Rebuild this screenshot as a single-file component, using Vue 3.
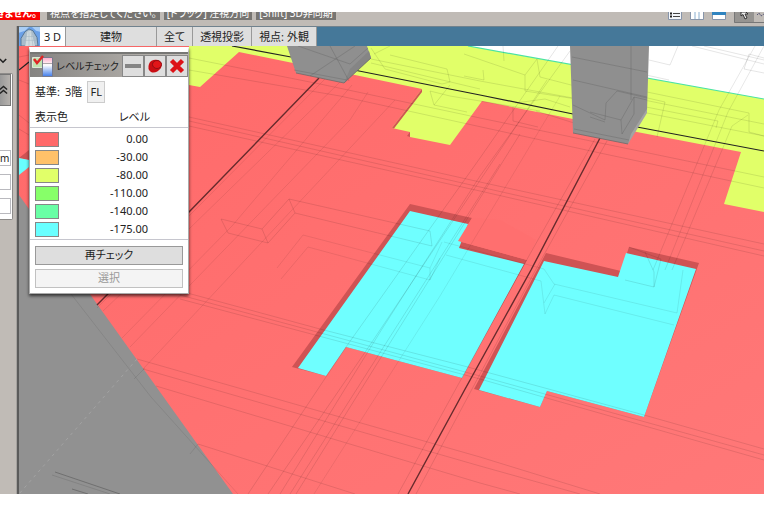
<script setup>
const levels = [
  { color: '#ff6969', value: '0.00' },
  { color: '#ffc169', value: '-30.00' },
  { color: '#e1ff69', value: '-80.00' },
  { color: '#87ff69', value: '-110.00' },
  { color: '#69ffa5', value: '-140.00' },
  { color: '#69ffff', value: '-175.00' }
]
const tabs = [
  { label: '建物', kind: 'wide' },
  { label: '全て', kind: '' },
  { label: '透視投影', kind: '' },
  { label: '視点: 外観', kind: '' }
]
</script>

<template>
  <div class="app">
    <header class="strip">
      <span class="chip alert">きません。</span>
      <span class="chip">視点を指定してください。</span>
      <span class="chip">[ドラッグ] 注視方向</span>
      <span class="chip">[Shift] 3D非同期</span>
      <div class="tools">
        <svg class="tool" viewBox="0 0 14 8"><path d="M.5 0V7.500H13.500V0" fill="#f4f7fb" stroke="#8795aa" /><path d="M2 1.500h2M2 4.500h2" stroke="#222" stroke-width="2" /><path d="M5 1.500h7M5 4.500h7" stroke="#444" /></svg>
        <svg class="tool" viewBox="0 0 14 8"><path d="M.5 0V7.500H13.500V0" fill="#fff" stroke="#8795aa" /><path d="M5 0V7M9 0V7" stroke="#8aafd0" /></svg>
        <svg class="tool" viewBox="0 0 14 8"><path d="M.5 0V7.500H13.500V0" fill="#fff" stroke="#8795aa" /><path d="M0 1.500H14" stroke="#2f84c0" stroke-width="3" /></svg>
        <svg class="cursor" viewBox="0 0 30 11"><path d="M0 0H20V10.500H0Z" fill="#969491" /><path d="M.5 0V10.500H30" fill="none" stroke="#777" /><path d="M7 0V4L9 2.500 11 7 13 6 11 2H14L12 0Z" fill="#eee" stroke="#333" /><path d="M23 3l2-2 2 3 3-2" fill="none" stroke="#557" stroke-dasharray="2 1" /></svg>
      </div>
    </header>

    <div class="main">
      <aside class="side">
        <button class="fold" aria-label="開く"><svg viewBox="0 0 10 8"><path d="M1 1.500L5 5.500 9 1.500" fill="none" stroke="#222" stroke-width="2" /></svg></button>
        <div class="group">
          <button class="collapse" aria-label="閉じる"><svg viewBox="0 0 10 10"><path d="M1 4.500L5 1 9 4.500M1 9L5 5.500 9 9" fill="none" stroke="#222" stroke-width="1.500" /></svg></button>
          <div class="fields">
            <input class="field" type="text" value="m" aria-label="単位">
            <input class="field" type="text" aria-label="値1">
            <input class="field" type="text" aria-label="値2">
          </div>
        </div>
      </aside>

      <section class="view">
        <nav class="tabs">
          <svg class="logo" viewBox="0 0 21 20" preserveAspectRatio="none">
            <rect width="21" height="20" fill="#6ba1e8" /><path d="M0 0H10L6 4 0 6ZM13 0H21V5L17 4Z" fill="#a9cdf5" />
            <path d="M2 20V12L6 5 10 2 14 4 18 11 19 20Z" fill="#a9bccb" stroke="#537595" /><path d="M6 20L8 5 12 4 16 20Z" fill="#d1dce0" /><path d="M8 5L6 20M10 5V20M12 5l2 15M6 10h9M5 14h12" stroke="#a0b2bf" stroke-width=".5" fill="none" />
          </svg>
          <button class="tab active">3 D</button>
          <button v-for="t in tabs" :key="t.label" class="tab" :class="t.kind">{{ t.label }}</button>
        </nav>

        <div class="canvas">
          <svg class="scene" viewBox="19 46 745 448">
            <defs>
              <linearGradient id="floor" x1="0" y1="0" x2="1" y2="1"><stop offset="0" stop-color="#ff6969" /><stop offset="1" stop-color="#ff7878" /></linearGradient>
            </defs>
            <rect x="19" y="46" width="745" height="448" fill="#fff" />
            <path d="M19 46H468L764 99V494H19Z" fill="#e1ff69" />
            <path d="M468 46L764 99" stroke="#4be3a3" stroke-width="1.200" />
            <path d="M19 46H189V85L200 87 239 52 293 63 355 75 422 89 392 128 410 132V137L450 145 482 101 573 119 637 132 741 152 724 204 764 212V494H19Z" fill="url(#floor)" />
            <path d="M422 89V92L394 128.500 392 128ZM410 132V137L407 136Z" fill="#cf5354" />
            <path d="M19 195L233 494H19Z" fill="#919191" />
            <path d="M19 158L29 150V160Z" fill="#cf5354" /><path d="M19 158L29 160V167L19 175Z" fill="#69ffff" />

            <path d="M410 204L472 218 458 241 527 260 462 378 346 347 326 376 292 367Z" fill="#cf5354" />
            <path d="M410 211L468 224 459 248 524 264 462 378 346 347 326 376 298 368Z" fill="#6fffff" />
            <path d="M472 218L458 241 527 260 536 240 500 220Z" fill="#ff6f6f" />
            <path d="M546 253L621 271 629 247 699 263 644 417 547 391 540 407 474 389Z" fill="#cf5354" />
            <path d="M544 261L618 277 626 253 696 269 644 417 547 391 540 407 479 390Z" fill="#6fffff" />

            <g fill="none" stroke="#000" stroke-opacity=".13" stroke-width=".8">
              <path d="M189 117L480 182 764 244M189 121L480 187 764 251M189 126L480 191 764 256" />
              <path d="M189 58L320 84 480 118 764 177M189 70L340 96 600 153 764 188" />
              <path d="M371 59L480 81 573 98M371 63L480 89M647 113L764 136" />
              <path d="M180 291L320 329 464 366 644 415 764 449M180 295L480 376 764 455M180 299L480 379 764 460" />
              <path d="M137 359L480 457 600 494M143 369L480 466 580 494M156 386L480 483 520 494M198 444L355 494" />
              <path d="M248 494L346 347 480 158 558 46M268 494L370 345 547 80M280 494L382 329 480 176 570 51M290 494L500 164M296 494L520 134" />
              <path d="M314 494L440 296 560 96" stroke-opacity=".09" />
              <path d="M398 494L530 254 595 139M416 494L535 271 607 141" />
              <path d="M97 308L189 216 325 79M103 311L189 229 340 82M122 338L232 226 352 85M130 347L350 120 368 92M143 369L395 100" stroke-opacity=".1" />
              <path d="M653 270L719 110 755 46M665 270L728 112 764 46M672 270L732 126 748 115" stroke-opacity=".12" />
              <path d="M221 219L262 229 289 199 430 231 432 246 295 213 268 243 228 233ZM262 229L268 243M289 199L295 213" />
              <path d="M277 268L303 235 430 268 442 242M281 279L308 247 430 280 440 258M430 268V280" stroke-opacity=".1" />
              <path d="M444 242L544 269 554 284 677 313 683 270M446 255L541 281 545 314 554 295 674 325M544 303L555 284" stroke-opacity=".1" />
              <path d="M629 247L661 259 654 287M645 252L654 272V287L625 280" />
              <path d="M374 54L390 46M371 48L385 69 442 84 450 82 447 69 390 55M430 91L434 105 450 85M430 91L450 96 540 111M434 105L467 112" />
              <path d="M464 54L525 75 537 59 540 77 575 86M464 76L484 80 483 70M515 103L545 99 570 107M536 111L574 123M513 107V121L538 127" />
              <path d="M504 61L503 46M525 75V91L576 99 615 111 617 91 665 102 657 137M646 107L718 121 716 128M647 92L749 113V132L764 136" />
              <path d="M596 64L669 80M603 123L605 121 622 118 634 98 764 124M621 118V134L634 114V98L646 101" />
              <path d="M649 60L670 65 678 46M744 69L749 54 764 58M744 69L764 73M692 46L764 64M704 46L764 60" />
              <path d="M19 57L29 55M19 80L29 84M19 115L29 123M19 129L29 135" />
              <path d="M71 294L151 397 238 494M145 368L134 379M198 444L190 454" stroke-opacity=".1" />
            </g>
            <path d="M137 359L19 494" stroke="#a3a3a3" stroke-width="1" stroke-dasharray="3 4" />
            <path d="M55 472L120 494M72 489L88 494" stroke="#707070" /><path d="M52 475L110 494" stroke="#838383" />

            <g fill="none" stroke="#222" stroke-width="1.200">
              <path d="M232 46L291 57M354 70L480 95 573 114M637 127L764 151" /><path d="M319 78L189 212 97 305M600 138L531 270 464 391 408 494" stroke="#672b2d" stroke-width="1.400" /><path d="M19 70L29 62" />
            </g>

            <path d="M287 46L296 73 344 83 355 72 371 58 367 46Z" fill="#8f8f8f" />
            <path d="M344 83L371 58 369 51 350 69Z" fill="#858585" />
            <path d="M570 46L573 133 628 144 637 127 647 111 649 46Z" fill="#8f8f8f" />
            <path d="M628 144L647 113V109L631 134Z" fill="#a3a3a3" />
            <g fill="none" stroke="#555" stroke-opacity=".35" stroke-width=".8">
              <path d="M294 70L347 80M298 46L350 64 368 48M310 76L355 46M330 46L349 81M574 129L629 140M572 57L647 72M573 80L647 97M573 105L605 120 606 103 617 91 647 98M590 112L621 120 622 134 634 114V97L647 100M621 120L634 97M631 46V100M605 122L590 117" />
            </g>
            <path d="M296 73L344 83 371 58M573 133L628 144" fill="none" stroke="#666" stroke-width=".7" />
          </svg>

          <div class="dialog" role="dialog" aria-labelledby="dlg-title">
            <div class="titlebar">
              <svg class="dlg-icon" viewBox="0 0 21 22">
                <defs><linearGradient id="scale" x1="0" y1="0" x2="0" y2="1"><stop offset="0" stop-color="#ffabc9" /><stop offset=".4" stop-color="#fff" /><stop offset="1" stop-color="#3f7bea" /></linearGradient></defs>
                <path d="M.5 2.500H10.500V12.500H.5Z" fill="#c1e4b1" stroke="#dfe9d8" /><path d="M10.500 2.500H20.500V21.500H10.500Z" fill="url(#scale)" stroke="#777a8e" /><path d="M11 8.500H20" stroke="#777" stroke-width=".6" />
                <path d="M2 4L5 8 11 1" fill="none" stroke="#df2525" stroke-width="2.500" />
              </svg>
              <span id="dlg-title" class="dlg-title">レベルチェック</span>
              <button class="tbtn" aria-label="最小化"><svg viewBox="0 0 20 20"><rect x="2" y="8" width="16" height="4" fill="#858585" /></svg></button>
              <button class="tbtn" aria-label="固定"><svg viewBox="0 0 20 20"><path d="M4 8Q6 3 13 4 18 6 16 12 11 18 6 16 2 13 4 8Z" fill="#c90d13" /><ellipse cx="12" cy="8.500" rx="4.500" ry="4" fill="#e21519" stroke="#930d14" /></svg></button>
              <button class="tbtn" aria-label="閉じる"><svg viewBox="0 0 20 20"><path d="M4.500 4.500L15.500 15.500M15.500 4.500L4.500 15.500" stroke="#dd1217" stroke-width="4.500" /></svg></button>
            </div>
            <div class="base"><span>基準:</span><span>3階</span><button class="fl">FL</button></div>
            <table class="levels">
              <thead><tr><th>表示色</th><th class="level-head">レベル</th></tr></thead>
              <tbody>
                <tr v-for="l in levels" :key="l.value">
                  <td><span class="swatch" :style="{ background: l.color }"></span></td>
                  <td class="num">{{ l.value }}</td>
                </tr>
              </tbody>
            </table>
            <div class="actions">
              <button class="action">再チェック</button>
              <button class="action" disabled>選択</button>
            </div>
          </div>
        </div>
      </section>
    </div>
  </div>
</template>

<style>
body { margin: 0; background: #fff; }
</style>

<style scoped>
* { box-sizing: border-box; }
.app {
  padding-top: 12px;
  font: 11px/16px "Noto Sans", "Noto Sans CJK JP", sans-serif;
  font-feature-settings: "palt";
  color: #222;
}
button, input { font: inherit; font-feature-settings: inherit; color: inherit; margin: 0; padding: 0; border-radius: 0; }
svg { display: block; }

.strip {
  display: flex;
  align-items: flex-end;
  gap: 4px;
  height: 14px;
  padding-bottom: 6px;
  overflow: hidden;
  background: #c0bbb6;
}
.chip { flex: none; padding: 0 3px; background: #777572; color: #fff; font-size: 10px; line-height: 14px; white-space: nowrap; }
.alert { display: flex; justify-content: flex-end; width: 40px; margin-right: 3px; background: #fa0000; font-weight: 700; }
.tools { display: flex; align-items: flex-start; gap: 8px; height: 8px; margin-left: auto; }
.tool { width: 14px; height: 8px; }
.cursor { width: 30px; height: 11px; }

.main { display: flex; }
.side {
  flex: none;
  width: 19px;
  padding-top: 28px;
  overflow: hidden;
  background: #c0bbb6;
  border-right: 2px solid #5b5b5b;
  box-shadow: inset -1px 0 #a5a29f;
}
.fold { display: block; width: 8px; height: 14px; border: 0; background: none; }
.fold svg { width: 8px; height: 8px; margin-left: -1px; }
.group { width: 13px; margin-top: 5px; padding-right: 1px; background: #fff; border: solid #8d8b89; border-width: 1px 1px 1px 0; border-radius: 0 2px 2px 0; }
.collapse { display: flex; align-items: center; width: 11px; height: 32px; border: 1px solid #777; border-left: 0; background: linear-gradient(90deg, #999, #b6b2ae); }
.collapse svg { width: 9px; height: 10px; margin-left: -1px; }
.fields { display: flex; flex-direction: column; gap: 8px; padding: 44px 0 5px; }
.field { width: 11px; height: 16px; border: 1px solid #b9b9be; border-left: 0; background: #fff; font-size: 10px; }

.view { flex: 1; min-width: 0; }
.tabs { display: flex; height: 20px; background: #457899; border-top: 1px solid #70828e; }
.logo { width: 21px; height: 19px; }
.tab { padding: 0 7px; border: 0; border-right: 1px solid #999; background: #dedede; white-space: nowrap; line-height: 18px; }
.active { width: 26px; padding: 0; background: #fff; word-spacing: normal; }
.wide { width: 91px; }

.canvas { position: relative; }
.scene { width: 100%; height: auto; }

.dialog {
  position: absolute;
  top: 1px;
  left: 10px;
  width: 160px;
  border: 1px solid #aaa;
  border-top: 5px solid #fff;
  background: #fff;
  box-shadow: 0 2px 3px rgba(0, 0, 0, .65);
}
.titlebar { display: flex; align-items: center; height: 25px; padding-left: 2px; border-top: 2px solid #777775; background: linear-gradient(90deg, #858381, #c1bdb7); }
.dlg-icon { flex: none; width: 21px; height: 22px; }
.dlg-title { flex: 1; font-size: 10px; text-align: center; white-space: nowrap; }
.tbtn { flex: none; width: 22px; height: 22px; border: 1px solid #888; background: #dedede; }
.tbtn svg { width: 20px; height: 20px; }
.base { display: flex; align-items: center; gap: 5px; height: 30px; padding-left: 5px; }
.fl { width: 18px; height: 22px; border: 1px solid #ccc; background: #f0f0f0; }
.levels { width: 100%; border-collapse: collapse; border-bottom: 1px solid #c6c6ce; }
.levels th { height: 20px; padding: 0 0 0 5px; font-weight: 400; text-align: left; border-bottom: 1px solid #c6c6ce; }
.levels .level-head { padding: 0 38px 0 0; text-align: right; }
.levels td { height: 18px; padding: 0 0 0 5px; }
.levels .num { padding: 0 40px 0 0; text-align: right; }
.levels tbody::before { content: ""; display: table-row; height: 3px; }
.levels tbody::after { content: ""; display: table-row; height: 1px; }
.swatch { display: block; width: 24px; height: 15px; border: 1px solid #878787; }
.actions { display: flex; flex-direction: column; gap: 4px; padding: 6px 5px 5px; }
.action { height: 19px; border: 1px solid #999; background: #dedede; line-height: 16px; }
.action:disabled { border-color: #c1c1c1; background: #f4f4f4; color: #999; }
</style>
